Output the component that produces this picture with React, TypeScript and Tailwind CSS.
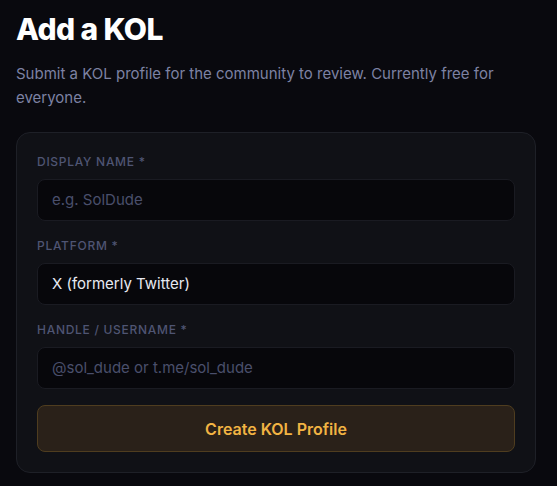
export default function App() {
  const font = { fontFamily: 'Inter, "Noto Sans", sans-serif' };
  return (
    <div className="min-h-[486px] w-full bg-[#09090e] px-4 pt-[10px]" style={font}>
      <h1 className="text-[30px] font-extrabold leading-[38px] tracking-[-0.02em] text-white">Add a KOL</h1>
      <p className="mt-[14px] text-[15px] leading-6 text-[#7d82a3]">
        Submit a KOL profile for the community to review. Currently free for everyone.
      </p>
      <div className="mt-[22px] w-[520px] rounded-[14px] border border-[#1e2027] bg-[#101116] p-5">
        <Field label="Display Name *" placeholder="e.g. SolDude" />
        <Field label="Platform *" value="X (formerly Twitter)" />
        <Field label="Handle / Username *" placeholder="@sol_dude or t.me/sol_dude" />
        <button className="flex h-[47px] w-full items-center justify-center rounded-lg border border-[#4f3d1f] bg-[#2a2119] text-[16px] font-semibold text-[#f2b443]">
          Create KOL Profile
        </button>
      </div>
    </div>
  );
}

function Field({ label, placeholder, value }: { label: string; placeholder?: string; value?: string }) {
  return (
    <div className="mb-4">
      <div className="mb-2 text-[12px] font-medium uppercase leading-[18px] tracking-[0.06em] text-[#4f5573]">{label}</div>
      <div className="flex h-[42px] items-center rounded-lg border border-[#1a1b22] bg-[#07070b] px-[14px] text-[15px]">
        {value ? <span className="text-[#e8eaf2]">{value}</span> : <span className="text-[#4a4f6c]">{placeholder}</span>}
      </div>
    </div>
  );
}
